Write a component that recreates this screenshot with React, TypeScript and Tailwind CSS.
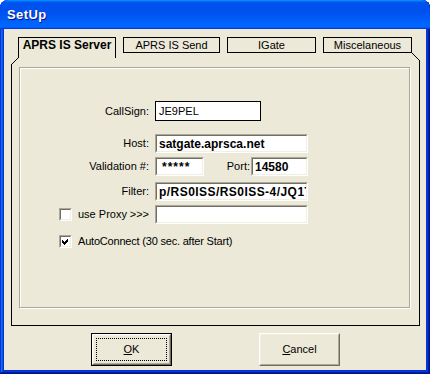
import React from "react";

const F = "font-['Liberation_Sans',Arial,sans-serif]";

function Sunken({ className = "", children }: { className?: string; children?: React.ReactNode }) {
  return (
    <div className={`border border-t-[#ACA899] border-l-[#ACA899] border-b-white border-r-white ${className}`}>
      <div className="h-full w-full border border-t-[#716F64] border-l-[#716F64] border-b-[#F1EFE2] border-r-[#F1EFE2] bg-white flex items-center overflow-hidden whitespace-nowrap">
        {children}
      </div>
    </div>
  );
}

function Check({ checked }: { checked?: boolean }) {
  return (
    <div className="w-[13px] h-[13px] shrink-0 border border-t-[#ACA899] border-l-[#ACA899] border-b-white border-r-white">
      <div className="w-full h-full border border-t-[#716F64] border-l-[#716F64] border-b-[#F1EFE2] border-r-[#F1EFE2] bg-white">
        {checked && (
          <svg width="9" height="9" viewBox="0 0 9 9" shapeRendering="crispEdges" className="block">
            <polygon points="1,3 3,5 7,1 7,4 3,8 1,6" fill="#000" />
          </svg>
        )}
      </div>
    </div>
  );
}

function Btn({ def, children }: { def?: boolean; children: React.ReactNode }) {
  const inner = (
    <div className="h-full w-full border border-t-white border-l-white border-b-[#716F64] border-r-[#716F64]">
      <div className="h-full w-full border border-t-[#F1EFE2] border-l-[#F1EFE2] border-b-[#ACA899] border-r-[#ACA899] flex items-center justify-center p-[2px]">
        {def ? (
          <div className="h-full w-full border border-dotted border-black flex items-center justify-center">{children}</div>
        ) : (
          children
        )}
      </div>
    </div>
  );
  return (
    <div className={`w-[81px] h-[33px] bg-[#ECE9D8] text-[11px] text-black ${def ? "border border-black" : ""}`}>
      {inner}
    </div>
  );
}

export default function App() {
  return (
    <div className={`w-[430px] h-[374px] ${F}`}>
      <div className="w-[430px] h-[374px] rounded-t-[8px] bg-[#0831D9] flex flex-col overflow-hidden shadow-[inset_-1px_-1px_#00138c,inset_1px_1px_#0831d9,inset_-2px_-2px_#001ea0,inset_2px_2px_#166aee,inset_-3px_-3px_#003bda,inset_3px_3px_#0855dd]">
        <div className="h-[29px] shrink-0 rounded-t-[8px] bg-[linear-gradient(180deg,#0997ff,#0053ee_8%,#0050ee_40%,#06f_88%,#06f_93%,#005bff_95%,#003dd7_96%,#003dd7)] flex items-center pl-[7px] pt-[1px]">
          <span className="text-white font-bold text-[13px] tracking-[0.4px] [text-shadow:1px_1px_#0f1089]">SetUp</span>
        </div>
        <div className="mx-[4px] h-[341px] bg-[#ECE9D8] pt-[8px] text-black">
          <div className="relative ml-[7px] w-[409px] h-[289px]">
            <div className="flex items-start gap-[7px] pl-[7px] h-[21px]">
              <div className="w-[98px] h-[21px] border-t border-l border-r border-black flex justify-center text-[12px] font-bold leading-[14px]">
                APRS IS Server
              </div>
              <div className="w-[97px] h-[16px] border border-black flex items-center justify-center text-[11px] leading-none">
                APRS IS Send
              </div>
              <div className="w-[89px] h-[16px] border border-black flex items-center justify-center text-[11px] leading-none">
                IGate
              </div>
              <div className="w-[89px] h-[16px] border border-black flex items-center justify-center text-[11px] leading-none">
                Miscelaneous
              </div>
            </div>
            <svg className="absolute inset-0 pointer-events-none" width="409" height="289" viewBox="0 0 409 289">
              <polyline
                points="7.5,20.5 0.5,27.5 0.5,288.5 408.5,288.5 408.5,23.5 400.5,15.5"
                fill="none"
                stroke="#000"
                strokeWidth="1"
                shapeRendering="crispEdges"
              />
            </svg>
            <div className="ml-[8px] mt-[9px] w-[391px] h-[241px] border border-[#ACA899] shadow-[1px_1px_0_#fff,inset_1px_1px_0_#fff]">
              <div className="flex flex-col pt-[33px] text-[11px]">
                <div className="flex items-center">
                  <div className="w-[129px] text-right">CallSign:</div>
                  <div className="ml-[6px] w-[106px] h-[20px] border border-black bg-white pl-[3px] flex items-center">
                    JE9PEL
                  </div>
                </div>
                <div className="mt-[13px] flex items-center">
                  <div className="w-[129px] text-right">Host:</div>
                  <Sunken className="ml-[6px] w-[153px] h-[19px]">
                    <span className="pl-[2px] font-bold text-[12px]">satgate.aprsca.net</span>
                  </Sunken>
                </div>
                <div className="mt-[4px] flex items-center">
                  <div className="w-[129px] text-right">Validation #:</div>
                  <Sunken className="ml-[6px] w-[49px] h-[19px]">
                    <span className="pl-[5px] font-bold text-[12px] tracking-[1px]">*****</span>
                  </Sunken>
                  <div className="w-[46px] text-right">Port:</div>
                  <Sunken className="ml-[1px] w-[57px] h-[19px]">
                    <span className="pl-[2px] font-bold text-[12px]">14580</span>
                  </Sunken>
                </div>
                <div className="mt-[6px] flex items-center">
                  <div className="w-[129px] text-right">Filter:</div>
                  <Sunken className="ml-[6px] w-[153px] h-[19px]">
                    <span className="pl-[2px] font-bold text-[12px] tracking-[0.45px]">p/RS0ISS/RS0ISS-4/JQ1T</span>
                  </Sunken>
                </div>
                <div className="mt-[4px] flex items-center">
                  <div className="w-[129px] flex items-center pl-[39px]">
                    <Check />
                    <span className="ml-[6px]">use Proxy</span>
                    <span className="ml-auto">&gt;&gt;&gt;</span>
                  </div>
                  <Sunken className="ml-[6px] w-[153px] h-[19px]" />
                </div>
                <div className="mt-[9px] flex items-center pl-[39px]">
                  <Check checked />
                  <span className="ml-[6px] tracking-[-0.2px]">AutoConnect (30 sec. after Start)</span>
                </div>
              </div>
            </div>
          </div>
          <div className="flex mt-[7px] pl-[87px] gap-[87px]">
            <Btn def>
              <span>
                <u>O</u>K
              </span>
            </Btn>
            <Btn>
              <span>
                <u>C</u>ancel
              </span>
            </Btn>
          </div>
        </div>
      </div>
    </div>
  );
}
